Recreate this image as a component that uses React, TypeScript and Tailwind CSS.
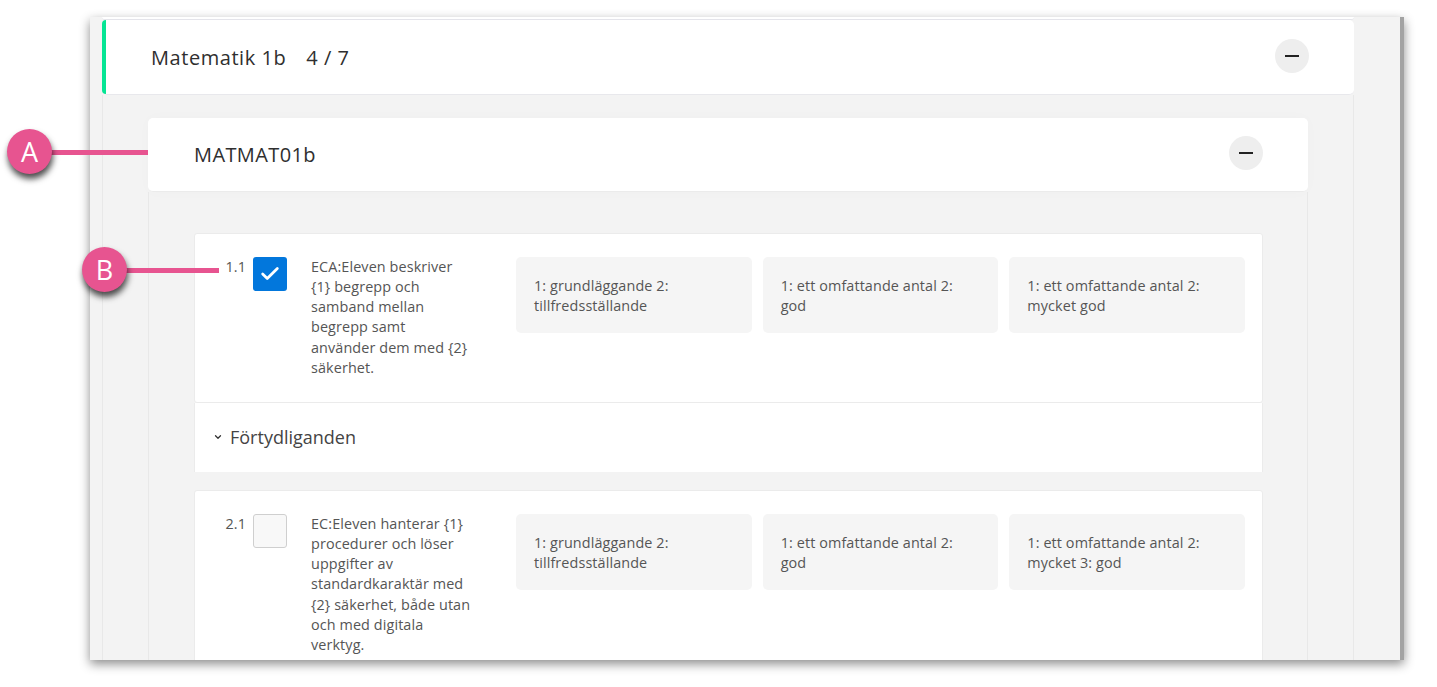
import React from 'react';
import { Check, ChevronDown, Minus } from 'lucide-react';

const font = { fontFamily: '"Open Sans", "Liberation Sans", sans-serif' };

interface RowProps {
  num: string;
  checked?: boolean;
  text: string;
  levels: string[];
}

const CriteriaRow: React.FC<RowProps> = ({ num, checked, text, levels }) => (
  <div className="flex pt-[23px] pb-[24px] pr-[17px] bg-white border border-[#ebebeb] rounded-[3px]">
    <div className="w-[51px] shrink-0 text-right text-[14.4px] leading-[20.16px] tracking-[0.1px] text-[#555]">{num}</div>
    <div className="ml-[7px] shrink-0">
      {checked ? (
        <div className="w-[34px] h-[34px] rounded-[3px] bg-[#0277dc] flex items-center justify-center">
          <Check className="w-[22px] h-[22px] text-white" strokeWidth={3} />
        </div>
      ) : (
        <div className="w-[34px] h-[34px] rounded-[3px] bg-[#f8f8f8] border border-[#cfcfcf]" />
      )}
    </div>
    <div className="ml-6 w-[160px] shrink-0 text-[14.4px] leading-[20.16px] tracking-[0.1px] text-[#555]">{text}</div>
    <div className="ml-[45px] flex-1 flex gap-[11px] items-start">
      {levels.map((l, i) => (
        <div key={i} className="flex-1 h-[76px] rounded-[5px] bg-[#f5f5f5] px-[18px] pt-[19px] text-[14.4px] leading-[20.16px] tracking-[0.1px] text-[#555]">
          {l}
        </div>
      ))}
    </div>
  </div>
);

const RoundMinus: React.FC<{ className: string }> = ({ className }) => (
  <div className={`w-[34px] h-[34px] rounded-full bg-[#eeeeee] flex items-center justify-center ${className}`}>
    <Minus className="w-6 h-6 text-[#222]" strokeWidth={2} strokeLinecap="butt" />
  </div>
);

const Callout: React.FC<{ letter: string; className: string; lineClass: string }> = ({ letter, className, lineClass }) => (
  <div className={`absolute flex items-center ${className}`}>
    <div className="relative z-10 w-[45px] h-[45px] rounded-full bg-[#e75490] flex items-center justify-center text-white text-[27px] font-medium leading-none shadow-[1px_5px_6px_rgba(0,0,0,0.7)]">
      {letter}
    </div>
    <div className={`h-[5px] mt-[2px] bg-[#e75490] ${lineClass}`} />
  </div>
);

export default function App() {
  return (
    <div className="relative w-[1437px] h-[687px] bg-white overflow-hidden" style={font}>
      <div className="absolute left-[90px] top-[17px] w-[1314px] h-[643px] bg-[#f3f3f3] border-r-4 border-[#a3a3a3] overflow-hidden shadow-[0_4px_10px_rgba(0,0,0,0.45)]">
        <div className="ml-3 w-[1252px]">
          <div className="h-[3px] bg-white border-b border-[#e4e4ea] rounded-b-[5px]" />
          <div className="h-[75px] bg-white border-b border-[#e8e8ec] rounded-[5px] relative flex items-center justify-between pl-[49px] pr-[45px]">
            <div className="absolute left-0 top-0 bottom-0 w-[4px] rounded-l-[5px] bg-[#05e594]" />
            <div className="mt-[2px] text-[20px] font-medium text-[#2f2f2f] tracking-[0.55px]">
              Matematik 1b<span className="ml-[20px]">4 / 7</span>
            </div>
            <RoundMinus className="mb-[2px]" />
          </div>
          <div className="h-[580px] border-x border-[#e8e8e8] pl-[45px] pr-[45px] pt-[23px]">
            <div className="h-[74px] bg-white border-b border-[#ebebeb] rounded-[5px] flex items-center justify-between pl-[46px] pr-[45px] shadow-[0_0_14px_rgba(0,0,0,0.02)]">
              <div className="text-[20px] font-medium text-[#2f2f2f] tracking-[0.4px]">MATMAT01b</div>
              <RoundMinus className="mb-[3px]" />
            </div>
            <div className="h-[500px] border-x border-[#e8e8e8] pl-[45px] pr-[44px] pt-[41px]">
              <CriteriaRow
                num="1.1"
                checked
                text="ECA:Eleven beskriver {1} begrepp och samband mellan begrepp samt använder dem med {2} säkerhet."
                levels={[
                  '1: grundläggande 2: tillfredsställande',
                  '1: ett omfattande antal 2: god',
                  '1: ett omfattande antal 2: mycket god',
                ]}
              />
              <div className="h-[69px] bg-white border-x border-[#ebebeb] flex items-center pl-[18px]">
                <ChevronDown className="w-[10px] h-[10px] text-[#333]" strokeWidth={3} />
                <span className="ml-[7px] text-lg text-[#444]">Förtydliganden</span>
              </div>
              <div className="mt-[18px]">
                <CriteriaRow
                  num="2.1"
                  text="EC:Eleven hanterar {1} procedurer och löser uppgifter av standardkaraktär med {2} säkerhet, både utan och med digitala verktyg."
                  levels={[
                    '1: grundläggande 2: tillfredsställande',
                    '1: ett omfattande antal 2: god',
                    '1: ett omfattande antal 2: mycket 3: god',
                  ]}
                />
              </div>
            </div>
          </div>
        </div>
      </div>
      <Callout letter="A" className="left-[7px] top-[129px]" lineClass="w-[97px] -ml-[1px]" />
      <Callout letter="B" className="left-[82px] top-[247px]" lineClass="w-[93px] -ml-[1px]" />
    </div>
  );
}
